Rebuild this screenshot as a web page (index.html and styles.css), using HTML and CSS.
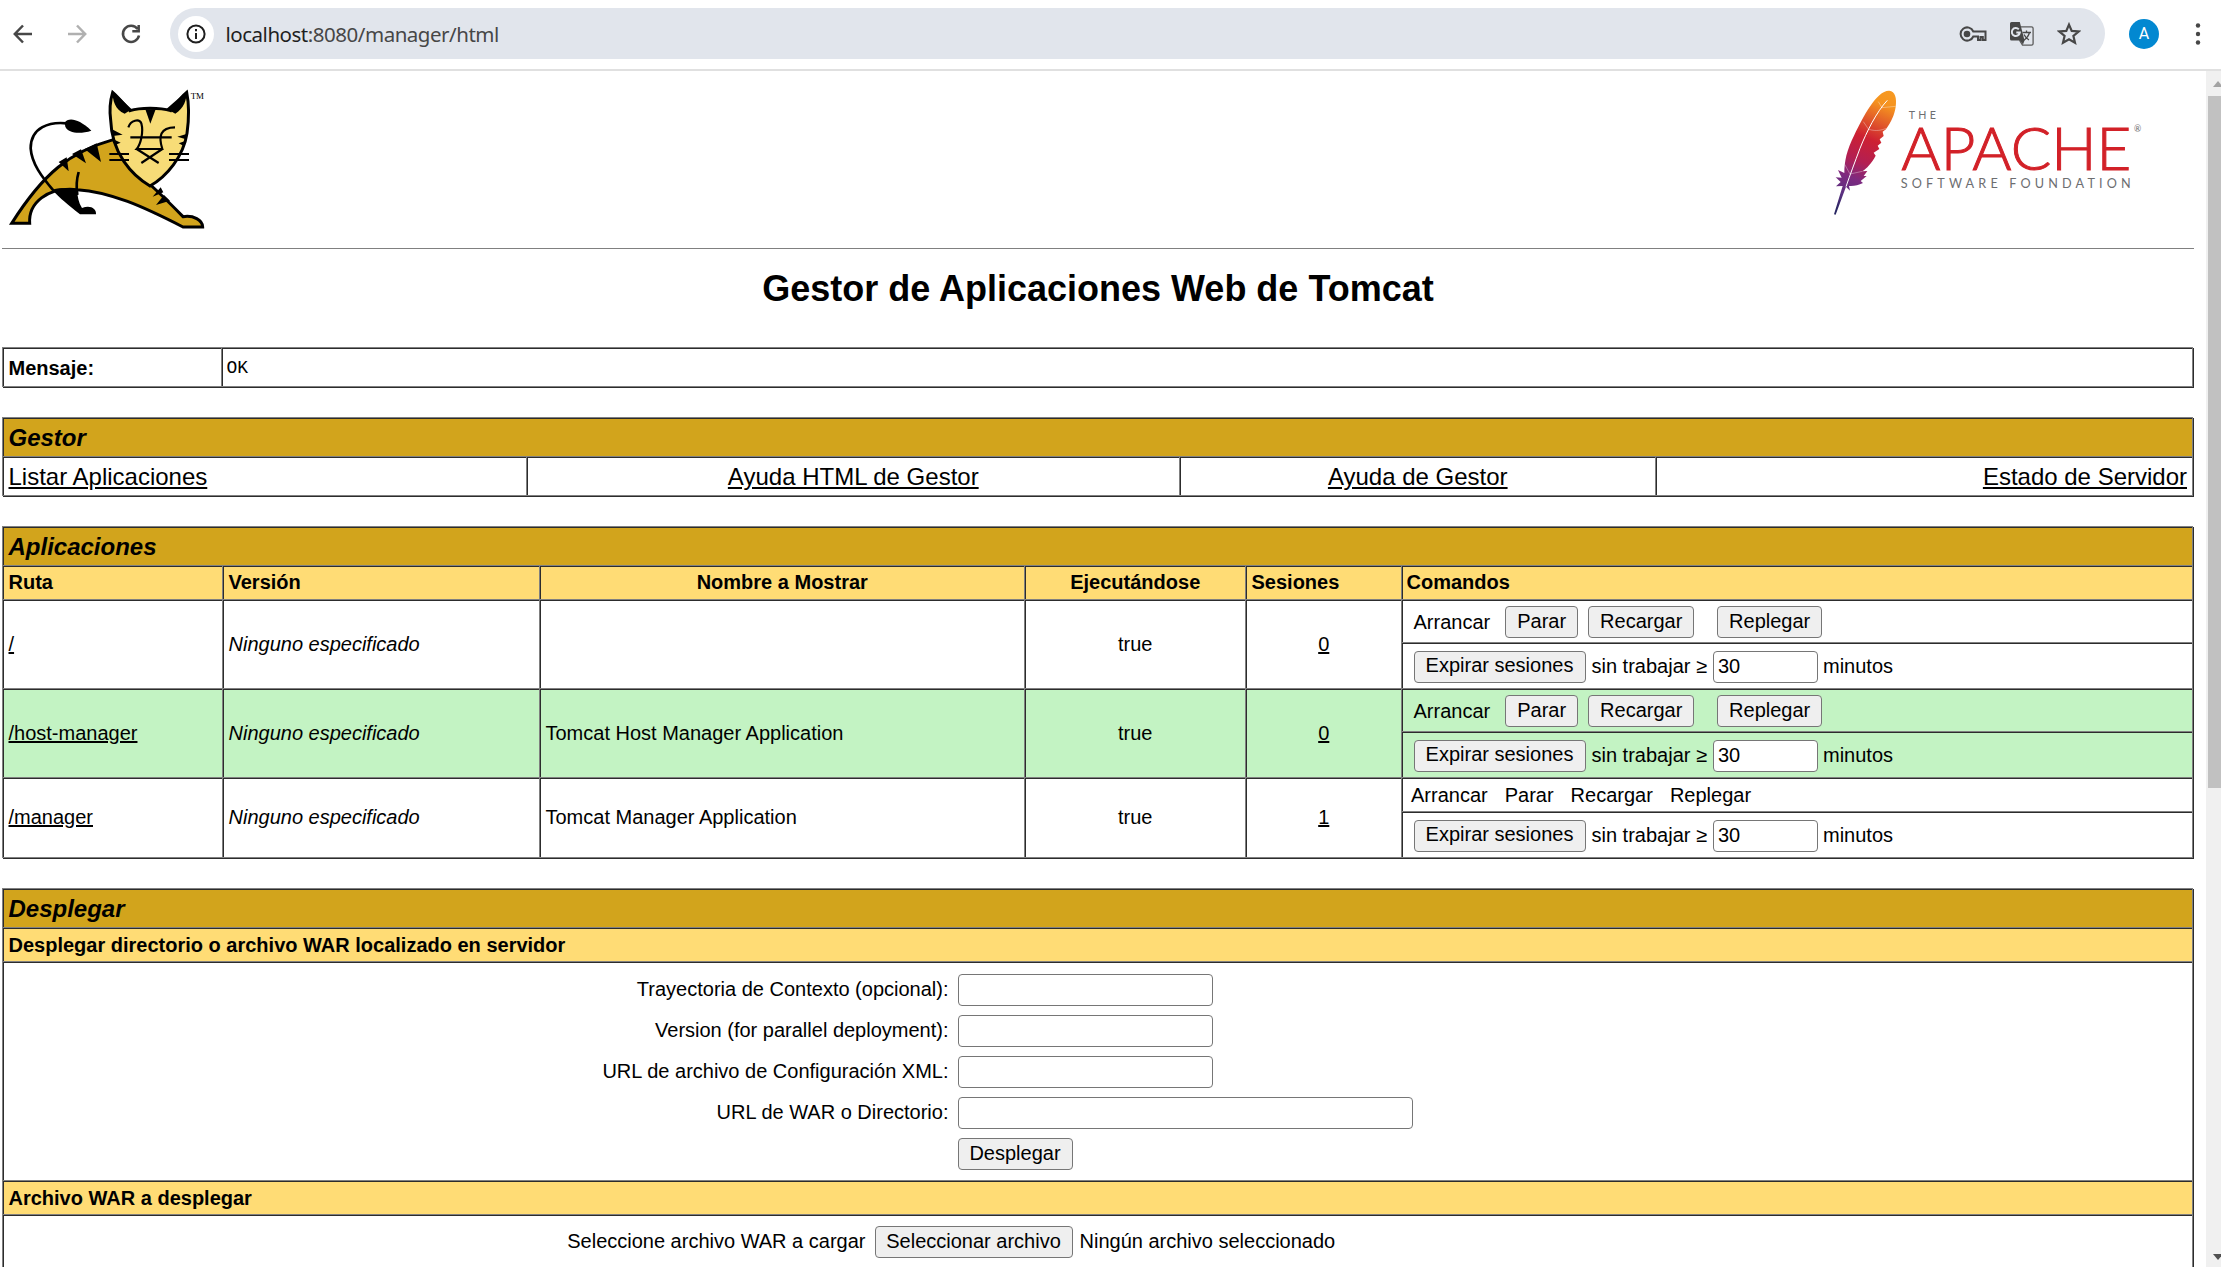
FILE: index.html
```html
<!DOCTYPE html>
<html lang="es">
<head>
<meta charset="utf-8">
<title>/manager</title>
<link rel="stylesheet" href="styles.css">
</head>
<body>
<header class="toolbar">
  <nav class="nav-icons">
    <svg width="24" height="24" viewBox="0 0 24 24"><path d="M21 12H4M12 3.5L3.8 12l8.2 8.500"/></svg>
    <svg class="off" width="24" height="24" viewBox="0 0 24 24"><path d="M3 12h17M12 3.500l8.200 8.500-8.200 8.500"/></svg>
    <svg width="24" height="24" viewBox="0 0 24 24"><path d="M18.600 7A8.100 8.100 0 1 0 20 13.500M19.700 3v6.300h-6.400"/></svg>
  </nav>
  <div class="omnibox">
    <span class="info"><svg width="20" height="20" viewBox="0 0 20 20"><circle cx="10" cy="10" r="8.600"/><path d="M10 9v6M10 5v2.200"/></svg></span>
    <span class="url"><b>localhost</b>:8080/manager/html</span>
    <div class="actions">
      <svg width="28" height="16" viewBox="0 0 28 16"><path d="M14.300 5.500H26.500V14H23.800V11H21.500V14H19V10.500H14.300A6.600 6.600 0 1 1 14.300 5.500z" fill="none" stroke="#474747" stroke-width="2"/><circle cx="8" cy="8" r="3.300" fill="#474747"/></svg>
      <svg width="26" height="26" viewBox="0 0 26 26"><path d="M12 5.800h10.500a1.600 1.600 0 0 1 1.600 1.600v15.200a1.600 1.600 0 0 1-1.600 1.600H13.500l-3-5" fill="none" stroke="#5c5c5c" stroke-width="1.300"/><path d="M13.500 11.500h8.500M17.500 9.500v2M20.500 11.500c-1 4-3 6-6 8M15 13.500c1.500 3 3 4.500 5 5.500" fill="none" stroke="#474747" stroke-width="1.300"/><path d="M2.500 1h8.300l4.700 18.500-1.500 4-3-4H2.500A1.500 1.500 0 0 1 1 18V2.500A1.500 1.500 0 0 1 2.500 1z" fill="#474747"/><path d="M9.800 8.300A4 4 0 1 0 10.800 11.500H7.300" fill="none" stroke="#e1e5ec" stroke-width="2"/></svg>
      <svg width="24" height="24" viewBox="0 0 24 24"><path d="M12 2.600l2.700 6.300 6.900.6-5.200 4.500 1.600 6.800-6-3.600-6 3.600 1.600-6.800L2.400 9.500l6.900-.6z" fill="none" stroke="#474747" stroke-width="2.200"/></svg>
    </div>
  </div>
  <span class="avatar">A</span>
  <svg class="kebab" width="6" height="24" viewBox="0 0 6 24"><circle cx="3" cy="3.500" r="2.200"/><circle cx="3" cy="12" r="2.200"/><circle cx="3" cy="20.500" r="2.200"/></svg>
</header>

<div class="viewport">
<main class="page">
  <div class="logos">
    <svg width="230" height="170" viewBox="0 0 690 510">
      <g stroke="#000" stroke-width="9" fill="none">
        <path d="M35 430C130 280 210 215 340 179L455 318C490 350 520 380 549 410C580 405 608 420 608 441H549C430 380 330 335 232 329C140 320 85 370 89 430z" fill="#d2a41c"/>
        <path d="M200 130C150 125 92 140 92 205C95 250 125 290 160 331" stroke-width="8"/>
        <path d="M236 276C229 300 229 325 232 345" stroke-width="8"/>
        <path d="M338 37C355 52 370 70 390 92C420 82 480 82 512 92C530 70 542 52 560 37C568 75 568 110 561 160C550 230 500 290 450 318C395 285 335 220 332 120C328 90 331 60 338 37z" fill="#f7dc77"/>
      </g>
      <path d="M194 128C205 112 235 115 274 152C240 163 205 160 196 140zM157 329C185 320 215 326 232 333C232 350 236 368 246 384C270 374 290 385 288 403H240C205 375 180 355 157 329zM176 246L200 232L206 274zM216 222L243 208L258 250zM254 207L290 190L303 246zM458 350L482 322L490 337zM468 375L492 345L510 362zM338 34L395 88L374 101C345 90 337 60 338 34zM560 34L500 86L526 101C552 85 560 60 560 34zM436 88H467L451 131zM336 148L368 164L338 168zM340 178L362 188L343 196zM562 161L532 170L558 178zM558 182L536 190L553 199z"/>
      <path d="M328 222h59M328 240h59M507 222h60M507 240h60M391 172h124M385 142C392 120 418 115 424 130C432 160 420 195 410 207H487C475 170 480 142 525 142M410 207L476 249M487 207L424 249" fill="none" stroke="#000" stroke-width="6.500"/>
      <text x="572" y="56" class="tm" textLength="40" lengthAdjust="spacingAndGlyphs">TM</text>
    </svg>
    <svg width="394" height="170" viewBox="0 0 1182 510">
      <defs><linearGradient id="quill" gradientUnits="userSpaceOnUse" x1="270" y1="35" x2="115" y2="405"><stop offset="0" stop-color="#f79b23"/><stop offset=".14" stop-color="#f5931f"/><stop offset=".28" stop-color="#e1592a"/><stop offset=".42" stop-color="#cd2032"/><stop offset=".6" stop-color="#b31f52"/><stop offset=".74" stop-color="#7d2a80"/><stop offset=".88" stop-color="#5a3080"/><stop offset="1" stop-color="#282662"/></linearGradient></defs>
      <g transform="translate(0 -15)">
      <path d="M268 47C285 49 291 68 287 96C283 120 275 138 258 163L248 170L251 183L239 193L244 203L233 212L238 222L221 233L227 242C215 265 200 280 187 289L202 288L191 303H200L182 318L189 324C175 331 162 334 147 333L150 347L138 335L107 419L102 418L128 333L108 334L122 321L107 307L125 308L114 285L133 294C133 260 140 225 163 180C190 125 230 45 268 47z" fill="url(#quill)"/>
      <path d="M262 76C230 110 200 170 180 220C165 260 150 300 138 335" fill="none" stroke="#fff" stroke-width="3"/>
      <path d="M235 80L246 98L287 94M190 140L206 163C230 170 245 165 260 160M134 268L150 297L187 289" fill="none" stroke="#fff" stroke-opacity=".5" stroke-width="2"/>
      <g class="asf">
        <text x="326" y="132" font-size="32" textLength="82">THE</text>
        <text x="304" y="286" font-size="180" textLength="690" class="red" lengthAdjust="spacingAndGlyphs">APACHE</text>
        <text x="302" y="340" font-size="38" textLength="690">SOFTWARE FOUNDATION</text>
        <text x="1002" y="172" font-size="26">®</text>
      </g></g>
    </svg>
  </div>
  <h1>Gestor de Aplicaciones Web de Tomcat</h1>

  <section class="box message">
    <div class="cell label">Mensaje:</div><div class="cell mono">OK</div>
  </section>

  <section class="box">
    <h2 class="cell title">Gestor</h2>
    <div class="links">
      <div class="cell"><a>Listar Aplicaciones</a></div><div class="cell mid"><a>Ayuda HTML de Gestor</a></div><div class="cell mid"><a>Ayuda de Gestor</a></div><div class="cell end"><a>Estado de Servidor</a></div>
    </div>
  </section>

  <section class="box">
    <h2 class="cell title">Aplicaciones</h2>
    <div class="app head">
      <div class="cell">Ruta</div><div class="cell">Versión</div><div class="cell mid">Nombre a Mostrar</div><div class="cell mid">Ejecutándose</div><div class="cell">Sesiones</div><div class="cell">Comandos</div>
    </div>
    <div class="app">
      <div class="cell"><a>/</a></div><div class="cell"><i>Ninguno especificado</i></div><div class="cell"></div><div class="cell mid">true</div><div class="cell mid"><a>0</a></div>
      <div class="commands">
        <div class="cell cmd"><span>Arrancar</span><button class="stop">Parar</button><button class="reload">Recargar</button><button class="undeploy">Replegar</button></div>
        <div class="cell expire"><button>Expirar sesiones</button><span class="idle">sin trabajar ≥</span><input value="30"><span>minutos</span></div>
      </div>
    </div>
    <div class="app alt">
      <div class="cell"><a>/host-manager</a></div><div class="cell"><i>Ninguno especificado</i></div><div class="cell">Tomcat Host Manager Application</div><div class="cell mid">true</div><div class="cell mid"><a>0</a></div>
      <div class="commands">
        <div class="cell cmd"><span>Arrancar</span><button class="stop">Parar</button><button class="reload">Recargar</button><button class="undeploy">Replegar</button></div>
        <div class="cell expire"><button>Expirar sesiones</button><span class="idle">sin trabajar ≥</span><input value="30"><span>minutos</span></div>
      </div>
    </div>
    <div class="app">
      <div class="cell"><a>/manager</a></div><div class="cell"><i>Ninguno especificado</i></div><div class="cell">Tomcat Manager Application</div><div class="cell mid">true</div><div class="cell mid"><a>1</a></div>
      <div class="commands">
        <div class="cell plain"><span>Arrancar</span><span>Parar</span><span>Recargar</span><span>Replegar</span></div>
        <div class="cell expire"><button>Expirar sesiones</button><span class="idle">sin trabajar ≥</span><input value="30"><span>minutos</span></div>
      </div>
    </div>
  </section>

  <section class="box">
    <h2 class="cell title">Desplegar</h2>
    <h3 class="cell sub">Desplegar directorio o archivo WAR localizado en servidor</h3>
    <form class="cell deploy">
      <label>Trayectoria de Contexto (opcional):</label><input>
      <label>Version (for parallel deployment):</label><input>
      <label>URL de archivo de Configuración XML:</label><input>
      <label>URL de WAR o Directorio:</label><input class="wide">
      <span></span><button type="button">Desplegar</button>
    </form>
    <h3 class="cell sub">Archivo WAR a desplegar</h3>
    <form class="cell upload">
      <label>Seleccione archivo WAR a cargar</label><button type="button">Seleccionar archivo</button><span>Ningún archivo seleccionado</span>
    </form>
  </section>
</main>
<aside class="scrollbar">
  <svg width="15" height="25" viewBox="0 0 15 25"><path d="M7 16l5-6 5 6z" fill="#a3a3a3"/></svg>
  <div class="thumb"></div>
  <svg width="15" height="25" viewBox="0 0 15 25"><path d="M7 12l5 6 5-6z" fill="#505050"/></svg>
</aside>
</div>
</body>
</html>
```
FILE: styles.css
```css
* { box-sizing: border-box; }
body { margin: 0; height: 1267px; overflow: hidden; background: #fff; color: #000; font: 20px "Liberation Sans", Arial, sans-serif; }
svg { display: block; flex: none; }

.toolbar { display: flex; align-items: center; height: 71px; padding: 0 20px 2px 11px; border-bottom: 2px solid #e0e0e0; }
.nav-icons { display: flex; gap: 30px; width: 159px; }
.nav-icons path { fill: none; stroke: #474747; stroke-width: 2.500; }
.nav-icons .off path { stroke: #b0b0b0; }
.omnibox { display: flex; align-items: center; width: 1935px; height: 51px; padding: 0 24px 0 8px; border-radius: 26px; background: #e1e5ec; }
.info { display: grid; place-items: center; width: 36px; height: 36px; border-radius: 50%; background: #fff; }
.info svg { fill: none; stroke: #1f1f1f; stroke-width: 2; }
.url { margin-left: 11.500px; font: 20.5px "Noto Sans", sans-serif; letter-spacing: -.48px; color: #474747; }
.url b { font-weight: 400; color: #1f1f1f; }
.actions { display: flex; align-items: center; gap: 22px; margin-left: auto; }
.avatar { display: grid; place-items: center; width: 30px; height: 30px; margin-left: 24px; border-radius: 50%; background: #0288d1; color: #fff; font: 16px Roboto, sans-serif; }
.kebab { margin-left: 36px; fill: #474747; }

.viewport { display: flex; height: 1196px; overflow: hidden; }
.page { width: 2206px; padding: 9px 12px 0 2px; }
.scrollbar { display: flex; flex-direction: column; width: 15px; background: #f0f0f0; }
.thumb { height: 692px; margin: 0 0 auto 2px; background: #c1c1c1; }

.logos { display: flex; justify-content: space-between; height: 169px; border-bottom: 1px solid #808080; }
.logos svg:first-child { margin-left: -2px; }
.tm { font: 25px "Liberation Serif", serif; }
.asf { font-family: Lato, sans-serif; fill: #6d6e71; }
.asf .red { font-weight: 300; fill: #d22128; stroke: #d22128; stroke-width: 3; }
h1 { margin: 0; height: 98px; padding-top: 19px; font-size: 36px; line-height: 42px; text-align: center; }

.box { width: 2191px; margin-bottom: 30px; border: solid #808080; border-width: 0 1px 1px 0; box-shadow: 1px 1px 0 #2c2c2c; }
.cell { display: flex; align-items: center; margin: 0; padding: 1px 5px 0 5.5px; border: solid #808080; border-width: 1px 0 0 1px; box-shadow: inset 1px 1px 0 #2c2c2c; }
.mid { justify-content: center; }
.end { justify-content: flex-end; }
a { text-decoration: underline; }

.message { display: grid; grid-template-columns: 219px 1fr; grid-template-rows: 39px; }
.label { padding-top: 3px; font-weight: 700; }
.mono { padding-left: 4.500px; font: 18px "Liberation Mono", monospace; }
.title { height: 39px; background: #d2a41c; font-size: 24px; font-style: italic; }
.links { display: grid; grid-template-columns: 524px 653px 476px 1fr; grid-template-rows: 39px; font-size: 24px; }

.app { display: grid; grid-template-columns: 220px 317px 485px 221px 156px 1fr; }
.app > .cell { padding-top: 0; }
.head, .sub { height: 34px; background: #ffdc75; font-size: 20px; font-weight: 700; }
.head .cell:last-child { padding-left: 4.500px; }
.alt { background: #c3f3c3; }
.commands { display: grid; }
.cmd { height: 43px; padding: 2px 0 0 11.500px; }
.expire { height: 46px; padding: 2px 0 0 11.500px; }
.plain { height: 34px; gap: 17px; padding-left: 9px; }
.stop { width: 73px; margin-left: 15px; }
.reload { width: 106px; margin-left: 10px; }
.undeploy { width: 105px; margin-left: 23px; }
.expire button { width: 172px; }
.idle { margin-left: 6px; }
.expire input { width: 105px; margin: 0 5px 0 6px; }

button, input { height: 32px; border: 1.500px solid #767676; border-radius: 4px; font: 20px "Liberation Sans", Arial, sans-serif; color: #000; }
button { padding: 0 0 2px; background: #efefef; }
input { padding: 0 4px; background: #fff; }

.deploy { display: grid; grid-template-columns: 940px 1fr; grid-auto-rows: 32px; gap: 9px; height: 219px; padding-top: 12px; align-content: start; justify-items: start; }
.deploy label { justify-self: end; padding-bottom: 2px; }
.deploy input { width: 255px; }
.deploy .wide { width: 455px; }
.deploy button { width: 115px; }
.upload { height: 90px; align-items: flex-start; padding-top: 11px; line-height: 31px; }
.upload label { width: 857px; text-align: right; line-height: 30px; }
.upload button { width: 198px; margin: 0 7px 0 9px; }
```
